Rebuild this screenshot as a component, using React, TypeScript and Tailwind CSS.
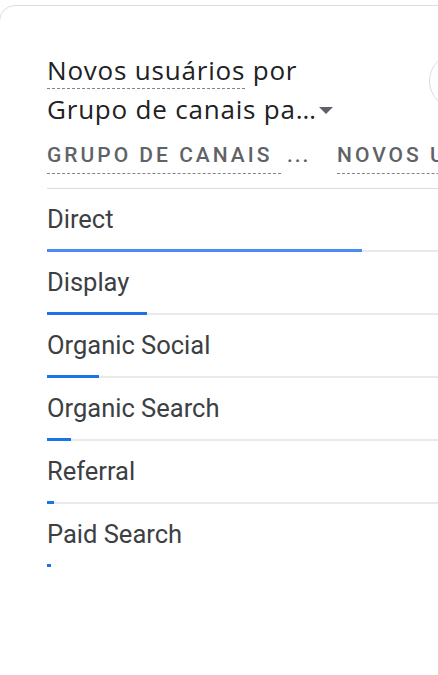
import React from "react";

const rows = [
  { label: "Direct", w: 315, color: "bg-[#4a8af4]" },
  { label: "Display", w: 100, color: "bg-[#1a73e8]" },
  { label: "Organic Social", w: 52, color: "bg-[#1a73e8]" },
  { label: "Organic Search", w: 24, color: "bg-[#1a73e8]" },
  { label: "Referral", w: 7, color: "bg-[#1a73e8]" },
  { label: "Paid Search", w: 4, color: "bg-[#1a73e8]", last: true },
];

export default function App() {
  return (
    <div className="w-[438px] h-[675px] overflow-hidden bg-white">
      <div className="ml-[-1px] mt-[5px] w-[600px] h-[720px] rounded-[16px] border border-[#dadce0] bg-white">
        <div className="pl-[47px] pt-[45px]">
          <div className="flex">
            <div className="w-[382px] font-['Open_Sans',sans-serif] text-[26px] tracking-[0.8px] leading-[39px] text-[#202124]">
              <div className="whitespace-nowrap">
                <span className="border-b border-dashed border-[#80868b]">Novos usuários</span> por
              </div>
              <div className="flex items-center whitespace-nowrap">
                <span>Grupo de canais pa…</span>
                <svg width="16" height="8" viewBox="0 0 16 8" className="ml-[1px] mt-[3px]">
                  <path d="M1 0 L15 0 L8 7 Z" fill="#5f6368" />
                </svg>
              </div>
            </div>
            <div className="w-[56px] h-[56px] mt-[2px] rounded-full border border-[#dadce0] shrink-0" />
          </div>
          <div className="h-[60px] border-b border-[#dadce0] flex pt-[14px] font-['Roboto',sans-serif] font-medium text-[21px] leading-[24px] tracking-[3px] text-[#5f6368]">
            <div className="w-[290px] shrink-0 whitespace-nowrap">
              <span className="inline-block pb-[6px] border-b border-dashed border-[#80868b]">GRUPO DE CANAIS&nbsp;</span>
              <span className="inline-block tracking-[2px] ml-[-1px]">&nbsp;...</span>
            </div>
            <div className="whitespace-nowrap">
              <span className="inline-block pb-[6px] border-b border-dashed border-[#80868b]">NOVOS USUÁRIOS</span>
            </div>
          </div>
          <div className="font-['Roboto',sans-serif] text-[25.5px] leading-[24px] text-[#3c4043]">
            {rows.map((r) => (
              <div key={r.label} className="h-[63px] flex flex-col">
                <div className="pt-[18px] whitespace-nowrap">{r.label}</div>
                <div className={`mt-auto relative h-[2px] ${r.last ? "" : "bg-[#e8eaed]"}`}>
                  <div
                    className={`absolute left-0 top-[-1px] h-[3px] ${r.color}`}
                    style={{ width: r.w }}
                  />
                </div>
              </div>
            ))}
          </div>
        </div>
      </div>
    </div>
  );
}
